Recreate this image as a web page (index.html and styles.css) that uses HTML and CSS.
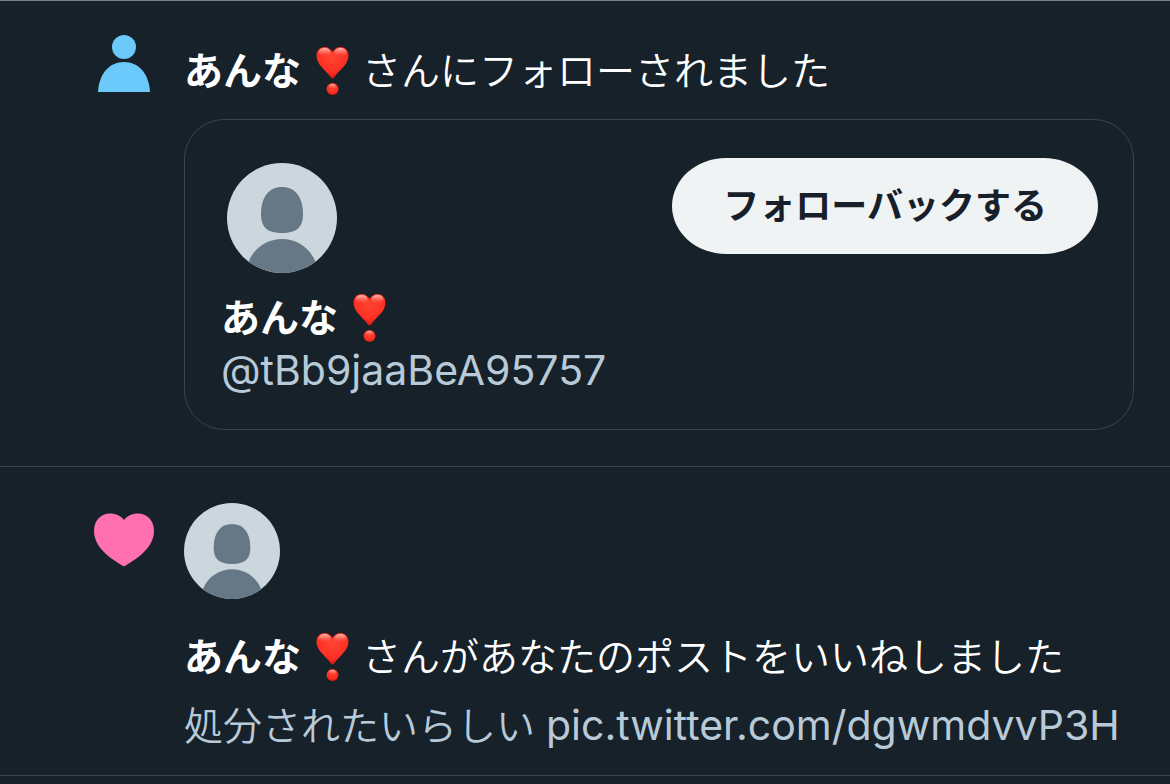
FILE: index.html
```html
<!DOCTYPE html>
<html lang="ja">
<head>
<meta charset="utf-8">
<meta name="viewport" content="width=device-width, initial-scale=1">
<title>通知</title>
<link rel="stylesheet" href="styles.css">
</head>
<body>
<svg class="defs" aria-hidden="true">
  <defs>
    <radialGradient id="heart-fill" cx="50%" cy="35%" r="65%">
      <stop offset="0" stop-color="#ff4532"/>
      <stop offset="0.7" stop-color="#fd2f22"/>
      <stop offset="1" stop-color="#d9180f"/>
    </radialGradient>
    <linearGradient id="heart-shine" x1="0" y1="0" x2="0" y2="1">
      <stop offset="0" stop-color="#ffc9c0" stop-opacity="0.95"/>
      <stop offset="1" stop-color="#ff5a48" stop-opacity="0"/>
    </linearGradient>
    <symbol id="heart-mark" viewBox="0 0 36 50">
      <path fill="url(#heart-fill)" d="M18.500 32.500C17.500 32.500 16.500 31 15 29C11 23.500 2.500 18.500 2.500 9.500C2.500 4.500 6 1 10.500 1C14 1 17 3 18.500 6C20 3 23 1 26.500 1C31 1 34.500 4.500 34.500 9.500C34.500 18.500 26 23.500 22 29C20.500 31 19.500 32.500 18.500 32.500Z"/>
      <ellipse cx="10.500" cy="6.500" rx="6" ry="4.500" fill="url(#heart-shine)"/>
      <ellipse cx="26.500" cy="6.500" rx="6" ry="4.500" fill="url(#heart-shine)"/>
      <circle cx="18.500" cy="43" r="6" fill="url(#heart-fill)"/>
      <ellipse cx="18.500" cy="40.500" rx="3.500" ry="2.500" fill="url(#heart-shine)"/>
    </symbol>
    <symbol id="default-avatar" viewBox="0 0 110 110">
      <clipPath id="avatar-clip"><circle cx="55" cy="55" r="55"/></clipPath>
      <g clip-path="url(#avatar-clip)">
        <rect width="110" height="110" fill="#ccd6dd"/>
        <path fill="#667786" d="M55 24C68 24 76 34 76 51C76 64 70 70 55 70C40 70 34 64 34 51C34 34 42 24 55 24Z"/>
        <path fill="#667786" d="M16 115L21.500 99C27 85 40 76 55 76C70 76 83 85 88.500 99L94 115Z"/>
      </g>
    </symbol>
  </defs>
</svg>

<main class="feed">
  <article class="notice notice-follow">
    <svg class="kind" viewBox="0 0 72 72" aria-hidden="true">
      <circle cx="36" cy="20" r="12" fill="#6bc9fb"/>
      <path fill="#6bc9fb" d="M10 65C11 47 21 35 36 35C51 35 61 47 62 65Z"/>
    </svg>
    <div class="body">
      <p class="headline"><strong>あんな</strong><svg class="mark" role="img" aria-label="ハート感嘆符"><use href="#heart-mark"/></svg><span>さんにフォローされました</span></p>
      <section class="card">
        <div class="card-top">
          <svg class="avatar avatar-large" role="img" aria-label="あんな"><use href="#default-avatar"/></svg>
          <button class="follow" type="button">フォローバックする</button>
        </div>
        <p class="headline"><strong>あんな</strong><svg class="mark" aria-hidden="true"><use href="#heart-mark"/></svg></p>
        <a class="handle" href="#profile">@tBb9jaaBeA95757</a>
      </section>
    </div>
  </article>

  <article class="notice notice-like">
    <svg class="kind" viewBox="0 0 72 72" aria-hidden="true">
      <path fill="#ff70b1" d="M36 65.500C22 57.500 6 46 6 30C6 19 13 12.500 22 12.500C28 12.500 33 15 36 19C39 15 44 12.500 50 12.500C59 12.500 66 19 66 30C66 46 50 57.500 36 65.500Z"/>
    </svg>
    <div class="body">
      <svg class="avatar" role="img" aria-label="あんな"><use href="#default-avatar"/></svg>
      <p class="headline"><strong>あんな</strong><svg class="mark" aria-hidden="true"><use href="#heart-mark"/></svg><span>さんがあなたのポストをいいねしました</span></p>
      <p class="post">処分されたいらしい <a href="#photo">pic.twitter.com/dgwmdvvP3H</a></p>
    </div>
  </article>
</main>
</body>
</html>
```

FILE: styles.css
```css
* {
  box-sizing: border-box;
}

body {
  margin: 0;
  background: #16212a;
  color: #fff;
  font-family: Inter, "Noto Sans CJK JP", sans-serif;
  font-size: 39px;
  line-height: 52px;
}

p {
  margin: 0;
}

a {
  color: inherit;
  text-decoration: none;
}

.defs {
  position: absolute;
  width: 0;
  height: 0;
}

.feed {
  border-top: 1px solid #72808a;
}

.notice {
  display: flex;
  gap: 24px;
  padding: 36px 36px 36px 88px;
  border-bottom: 1px solid #39444d;
}

.notice-follow {
  padding-top: 44px;
}

.notice-like {
  padding-bottom: 23px;
}

.kind {
  flex: none;
  width: 72px;
  height: 72px;
}

.notice-follow .kind {
  margin-top: -18px;
}

.notice-like .kind {
  margin-top: -2px;
}

.body {
  flex: 1;
  min-width: 0;
}

.headline {
  display: flex;
  align-items: center;
  font-weight: 350;
}

.headline strong {
  font-weight: 700;
}

.mark {
  flex: none;
  width: 36px;
  height: 50px;
  margin: 0 12px 0 13px;
}

.card {
  margin-top: 22px;
  padding: 38px 35px 33px 36px;
  border: 1px solid #39444d;
  border-radius: 40px;
}

.card-top {
  display: flex;
  justify-content: space-between;
  align-items: flex-start;
  margin-bottom: 19px;
}

.avatar {
  display: block;
  width: 96px;
  height: 96px;
}

.avatar-large {
  width: 110px;
  height: 110px;
  margin: 5px 0 0 6px;
}

.follow {
  height: 96px;
  padding: 0 51px;
  border: 0;
  border-radius: 54px / 48px;
  background: #eff3f4;
  color: #17202a;
  font: inherit;
  font-size: 36px;
  font-weight: 700;
}

.handle {
  display: block;
  color: #b8cad8;
  font-size: 41px;
}

.notice-like .headline {
  margin-top: 32px;
}

.post {
  margin-top: 16px;
  color: #b8cad8;
  font-weight: 350;
}

.post a {
  font-size: 41px;
  font-weight: 400;
}
```
